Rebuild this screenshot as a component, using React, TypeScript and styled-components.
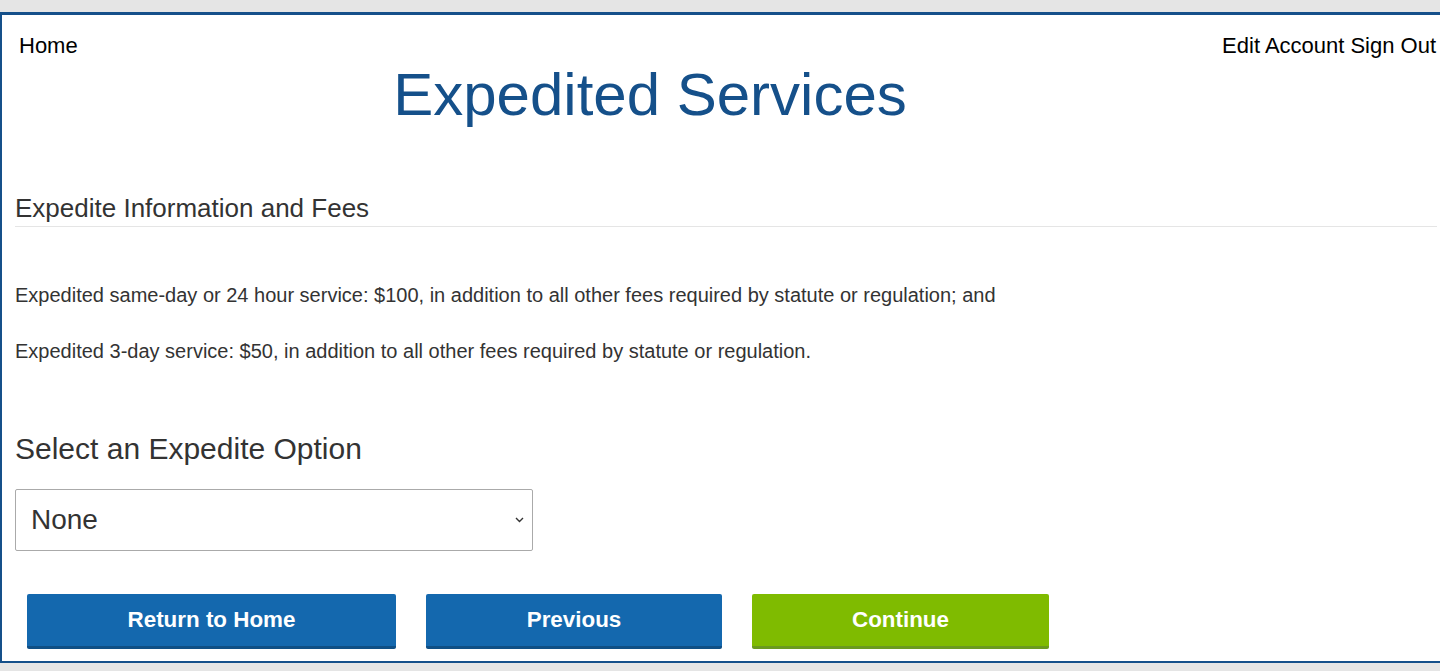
import React from "react";
import styled, { createGlobalStyle } from "styled-components";

type Props = {
  className?: string;
};

type ButtonProps = {
  $variant: "primary" | "success";
  $width: number;
};

// global page styles
const GlobalStyle = createGlobalStyle`
  html, body {
    margin: 0;
    padding: 0;
    background: #e5e5e5;
    overflow: hidden;
  }

  * {
    box-sizing: border-box;
  }
`;

const Frame = styled.div`
  margin-top: 12px;
  width: 1450px;
  background: #ffffff;
  border-top: 3px solid #15508a;
  border-left: 2px solid #15508a;
  border-bottom: 2px solid #15508a;
  padding-bottom: 12px;
  font-family: "Liberation Sans", Arial, sans-serif;
  color: #333333;
`;

const TopNav = styled.div`
  display: flex;
  flex-direction: row;
  justify-content: space-between;
  align-items: center;
  padding: 18px 14px 0 17px;
`;

const NavGroup = styled.div`
  display: flex;
  flex-direction: row;
  gap: 6px;
`;

const NavLink = styled.a`
  font-size: 22px;
  line-height: 25px;
  color: #000000;
  text-decoration: none;
  cursor: pointer;
`;

const Title = styled.h1`
  width: 1296px;
  margin: 4px 0 0;
  font-size: 60px;
  font-weight: normal;
  line-height: 66px;
  text-align: center;
  color: #15508a;
`;

const Content = styled.div`
  padding: 0 13px;
`;

const Legend = styled.div`
  margin-top: 66px;
  padding-bottom: 3px;
  font-size: 26px;
  line-height: 28.6px;
  border-bottom: 1px solid #e5e5e5;
  color: #333333;
`;

const FeeText = styled.p`
  margin: 0;
  font-size: 20px;
  line-height: 28.6px;
  color: #333333;

  & + & {
    margin-top: 28px;
  }
`;

const FeeList = styled.div`
  margin-top: 54px;
`;

const OptionLabel = styled.label`
  display: block;
  margin-top: 66px;
  font-size: 30px;
  line-height: 33px;
  color: #333333;
`;

const SelectWrap = styled.div`
  position: relative;
  margin-top: 24px;
  width: 518px;
`;

const OptionSelect = styled.select`
  display: block;
  width: 100%;
  height: 62px;
  padding: 0 30px 0 15px;
  appearance: none;
  font-family: "Liberation Sans", Arial, sans-serif;
  font-size: 28px;
  color: #333333;
  background: #ffffff;
  border: 1px solid #aaaaaa;
  border-radius: 2px;
`;

const Chevron = styled.svg`
  position: absolute;
  right: 9px;
  top: 28px;
  width: 9px;
  height: 6px;
  pointer-events: none;
`;

const ButtonRow = styled.div`
  display: flex;
  flex-direction: row;
  gap: 30px;
  margin-top: 43px;
  padding-left: 25px;
`;

const ActionButton = styled.button<ButtonProps>`
  width: ${(p) => p.$width}px;
  height: 55px;
  padding: 0;
  border: none;
  border-radius: 2px;
  border-bottom: 3px solid
    ${(p) => (p.$variant === "success" ? "#6a9a1e" : "#0f4f85")};
  background: ${(p) => (p.$variant === "success" ? "#7fbb00" : "#1468ae")};
  color: #ffffff;
  font-family: "Liberation Sans", Arial, sans-serif;
  font-size: 22.4px;
  font-weight: bold;
  cursor: pointer;
`;

export default function App(props: Props) {
  return (
    <>
      <GlobalStyle />
      <Frame className={props.className}>
        <TopNav>
          <NavLink>Home</NavLink>
          <NavGroup>
            <NavLink>Edit Account</NavLink>
            <NavLink>Sign Out</NavLink>
          </NavGroup>
        </TopNav>
        <Title>Expedited Services</Title>
        <Content>
          <Legend>Expedite Information and Fees</Legend>
          <FeeList>
            <FeeText>
              Expedited same-day or 24 hour service: $100, in addition to all
              other fees required by statute or regulation; and
            </FeeText>
            <FeeText>
              Expedited 3-day service: $50, in addition to all other fees
              required by statute or regulation.
            </FeeText>
          </FeeList>
          <OptionLabel htmlFor="expedite-option">
            Select an Expedite Option
          </OptionLabel>
          <SelectWrap>
            <OptionSelect id="expedite-option" defaultValue="none">
              <option value="none">None</option>
              <option value="3day">Expedited 3-day service</option>
              <option value="sameday">Expedited same-day service</option>
            </OptionSelect>
            <Chevron viewBox="0 0 9 6">
              <path
                d="M1 1 L4.5 4.5 L8 1"
                fill="none"
                stroke="#333333"
                strokeWidth="1.4"
              />
            </Chevron>
          </SelectWrap>
        </Content>
        <ButtonRow>
          <ActionButton $variant="primary" $width={369}>
            Return to Home
          </ActionButton>
          <ActionButton $variant="primary" $width={296}>
            Previous
          </ActionButton>
          <ActionButton $variant="success" $width={297}>
            Continue
          </ActionButton>
        </ButtonRow>
      </Frame>
    </>
  );
}
